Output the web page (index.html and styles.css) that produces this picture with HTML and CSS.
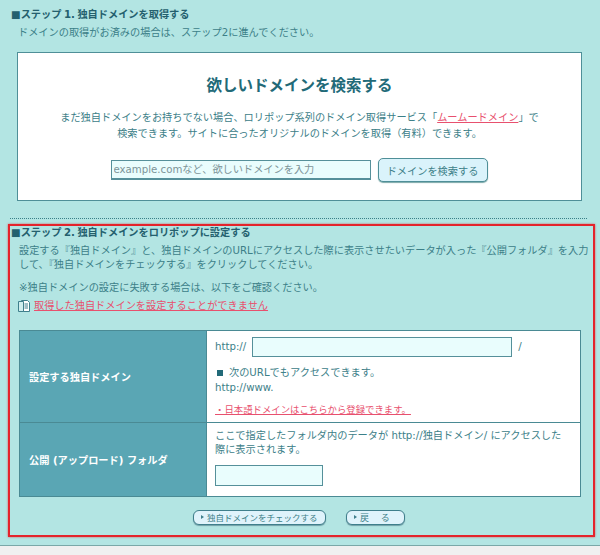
FILE: index.html
```html
<!DOCTYPE html>
<html lang="ja">
<head>
<meta charset="utf-8">
<title>独自ドメイン設定</title>
<link rel="stylesheet" href="styles.css">
</head>
<body>
<main class="page">
  <section class="step-one">
    <h2 class="step-title">■ステップ 1. 独自ドメインを取得する</h2>
    <p class="step-lead">ドメインの取得がお済みの場合は、ステップ2に進んでください。</p>
    <div class="search-box">
      <h3 class="search-title">欲しいドメインを検索する</h3>
      <p class="search-text">まだ独自ドメインをお持ちでない場合、ロリポップ系列のドメイン取得サービス「<a href="#" class="link">ムームードメイン</a>」で<br>検索できます。サイトに合ったオリジナルのドメインを取得（有料）できます。</p>
      <div class="search-row">
        <input class="field search-field" type="text" placeholder="example.comなど、欲しいドメインを入力">
        <button class="search-button" type="button">ドメインを検索する</button>
      </div>
    </div>
  </section>
  <div class="divider"></div>
  <section class="step-two">
    <h2 class="step-title">■ステップ 2. 独自ドメインをロリポップに設定する</h2>
    <p class="intro">設定する『独自ドメイン』と、独自ドメインのURLにアクセスした際に表示させたいデータが入った『公開フォルダ』を入力して、『独自ドメインをチェックする』をクリックしてください。</p>
    <p class="note">※独自ドメインの設定に失敗する場合は、以下をご確認ください。</p>
    <p class="help">
      <svg class="doc-icon" width="12" height="14" viewBox="0 0 12 14" aria-hidden="true"><path d="M3.5 1.5h6l2 2v9h-8z" fill="#fff" stroke="#3f7f8c"/><path d="M.5 2.5h5v10h-5z" fill="#cfeeee" stroke="#3f7f8c"/><path d="M6.5 5h3.5M6.5 7h3.5M6.5 9h3.5" stroke="#3f7f8c"/></svg>
      <a href="#" class="link">取得した独自ドメインを設定することができません</a>
    </p>
    <table class="form-table">
      <tr class="row-domain">
        <th>設定する独自ドメイン</th>
        <td>
          <div class="domain-line"><span>http://</span><input class="field domain-field" type="text"><span>/</span></div>
          <p class="www-note"><span class="square"></span>次のURLでもアクセスできます。<br>http://www.</p>
          <p class="jp-link"><a href="#" class="link">・日本語ドメインはこちらから登録できます。</a></p>
        </td>
      </tr>
      <tr class="row-folder">
        <th>公開 (アップロード) フォルダ</th>
        <td>
          <p class="folder-note">ここで指定したフォルダ内のデータが http://独自ドメイン/ にアクセスした際に表示されます。</p>
          <input class="field folder-field" type="text">
        </td>
      </tr>
    </table>
    <div class="actions">
      <button class="pill pill-check" type="button"><span class="arrow"></span>独自ドメインをチェックする</button>
      <button class="pill pill-back" type="button"><span class="arrow"></span>戻　 る</button>
    </div>
  </section>
</main>
</body>
</html>
```
FILE: styles.css
```css
* { box-sizing: border-box; }
html, body { margin: 0; height: 555px; overflow: hidden; }
body {
  background: #f0f0f0;
  color: #3c8088;
  font-family: "DejaVu Sans", "Noto Sans CJK JP", sans-serif;
  font-size: 10.2px;
}
p, h2, h3 { margin: 0; }
.page { background: #b3e5e3; height: 546px; border-bottom: 1px solid #7aa8a8; padding-top: 8px; }
.step-title { font-size: 10.2px; line-height: 14px; font-weight: 700; color: #24606e; word-spacing: -1px; }
.step-one { padding: 0 18px 0 11px; }
.step-lead { margin: 4px 0 0 7px; line-height: 14px; }
.search-box {
  margin: 12px 0 0 6px;
  height: 149px;
  background: #fff;
  border: 1px solid #4f8f98;
  text-align: center;
  padding-top: 23px;
}
.search-title { font-size: 15.5px; line-height: 20px; color: #226a78; font-weight: 700; }
.search-text { margin-top: 14px; line-height: 15.5px; }
.search-row { margin-top: 17px; display: flex; justify-content: center; align-items: center; gap: 7px; padding-right: 1px; }
.field { background: #e9fdfd; border: 1px solid #55909a; border-radius: 0; margin: 0; padding: 0 2px; font: inherit; }
.field::placeholder { color: #7c9498; opacity: 1; }
.search-field { width: 260px; height: 20px; border-bottom-width: 2px; }
.search-button {
  width: 110px; height: 24px;
  background: #daf3fb; color: #3c8088;
  border: 1px solid #4f8f98; border-radius: 5px;
  box-shadow: 0 1px 1px #7aa8a8;
  font: inherit; padding: 0;
}
.link { color: #e8506e; text-decoration: underline; }
.divider { margin: 17px 13px 0 10px; border-top: 1px dotted #3a7f88; }
.step-two {
  margin: 5px 5px 0 8px;
  height: 313px;
  border: 2px solid #e4232b;
  box-shadow: 0 0 2px rgba(228, 35, 43, .7);
  padding: 0 0 0 1px;
}
.intro { margin: 4px 1px 0 8px; line-height: 13.5px; }
.note { margin: 10px 0 0 8px; line-height: 14px; }
.help { margin: 4px 0 0 7px; display: flex; align-items: center; gap: 4px; line-height: 14px; }
.doc-icon { flex: none; }
.form-table {
  margin: 16.5px 0 0 8px;
  width: 562px;
  height: 166px;
  border-collapse: collapse;
  background: #fff;
}
.form-table th, .form-table td { border: 1px solid #4a8a94; }
.form-table th {
  width: 187px;
  background: #5aa6b4;
  color: #fff;
  font-weight: 700;
  text-align: left;
  padding: 0 0 0 9px;
}
.form-table td { padding: 0 8px; vertical-align: top; }
.row-domain { height: 92px; }
.row-folder { height: 74px; }
.domain-line { display: flex; align-items: center; gap: 6px; margin-top: 6px; }
.domain-field { width: 260px; height: 20px; }
.www-note { margin-top: 8px; line-height: 15px; }
.square { display: inline-block; width: 6px; height: 6px; background: #226a78; margin: 0 6px 0 2px; }
.jp-link { margin-top: 8px; line-height: 14px; font-size: 9.4px; }
.folder-note { margin-top: 6px; line-height: 14px; padding-right: 6px; }
.folder-field { display: block; width: 108px; height: 21px; margin-top: 8px; }
.actions { display: flex; justify-content: center; gap: 20px; margin-top: 13px; padding-right: 6px; }
.pill {
  height: 15px;
  display: flex; align-items: center;
  background: #dff3fb; color: #3c8088;
  border: 1px solid #3f7f8c; border-radius: 6px;
  box-shadow: 0 1px 1px #6f9ea6;
  font: inherit; font-size: 8.5px; padding: 0 0 0 7px;
  white-space: nowrap;
}
.pill-check { width: 133px; }
.pill-back { width: 59px; white-space: pre; font-size: 9px; }
.arrow { width: 0; height: 0; border-left: 3px solid #3f7f8c; border-top: 2.5px solid transparent; border-bottom: 2.5px solid transparent; margin-right: 3px; }
```
